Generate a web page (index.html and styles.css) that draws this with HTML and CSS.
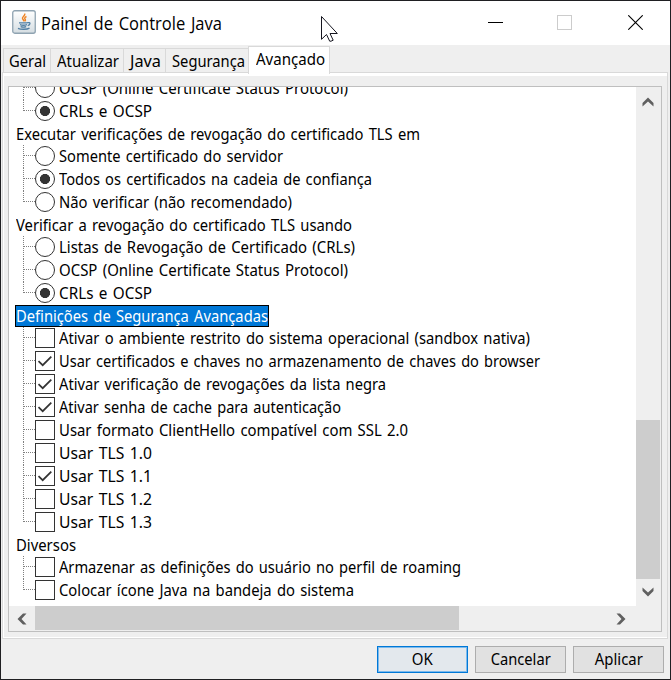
FILE: index.html
```html
<!DOCTYPE html>
<html lang="pt-BR">
<head>
<meta charset="utf-8">
<title>Painel de Controle Java</title>
<link rel="stylesheet" href="styles.css">
</head>
<body>
<div class="window">
  <header class="titlebar">
    <svg class="logo" width="24" height="24" viewBox="0 0 24 24">
      <defs><linearGradient id="g" x1="0" y1="0" x2="0" y2="1"><stop offset="0" stop-color="#fff"/><stop offset="1" stop-color="#d5dde2"/></linearGradient></defs>
      <rect x=".75" y=".75" width="22.5" height="22.5" rx="2" fill="url(#g)" stroke="#8fa3b1" stroke-width="1.3"/>
      <path d="M12.700 3.500c1.200 2-3 3.200-2.200 5 .3.900 1.500 1.600 1.500 3M14.500 6.500c-2.400 1.200-2 2.100-1.200 3 .5.700 0 1.300-.4 1.700" fill="none" stroke="#ef8322" stroke-width="1.400"/>
      <path d="M7 12.800h8.500M8 14.700c2 .7 5 .6 7 0M8.600 16.600c1.800.6 4 .6 5.600 0M15.500 12.700c3.300-.8 3.200 2.200.2 3M6 18.300c3 1.400 9 1.200 11.500-.2" fill="none" stroke="#527fa3" stroke-width="1.300"/>
    </svg>
    <span class="title" data-width="181">Painel de Controle Java</span>
    <div class="controls">
      <svg width="15" height="15" viewBox="0 0 15 15" shape-rendering="crispEdges"><path d="M0 7.500h15" stroke="#000"/></svg>
      <svg width="15" height="15" viewBox="0 0 15 15"><rect x=".5" y=".5" width="14" height="14" fill="none" stroke="#ccc"/></svg>
      <svg class="close" width="15" height="15" viewBox="0 0 15 15"><path d="M.3.3l14.400 14.400M14.700.3L.3 14.700" stroke="#000" stroke-width="1.100"/></svg>
    </div>
  </header>
  <nav class="tabs">
    <div class="tab geral"><span data-width="37">Geral</span></div>
    <div class="tab atualizar"><span data-width="62">Atualizar</span></div>
    <div class="tab java"><span data-width="31">Java</span></div>
    <div class="tab seguranca"><span data-width="73">Segurança</span></div>
    <div class="tab active"><span data-width="69">Avançado</span></div>
  </nav>
  <main class="pane">
    <div class="scrollpane">
      <div class="view">
        <ul class="group">
          <li><i class="radio"></i><span data-width="289">OCSP (Online Certificate Status Protocol)</span></li>
          <li><i class="radio on"></i><span data-width="93">CRLs e OCSP</span></li>
        </ul>
        <div class="head"><span data-width="404">Executar verificações de revogação do certificado TLS em</span></div>
        <ul class="group">
          <li><i class="radio"></i><span data-width="224">Somente certificado do servidor</span></li>
          <li><i class="radio on"></i><span data-width="313">Todos os certificados na cadeia de confiança</span></li>
          <li><i class="radio"></i><span data-width="233">Não verificar (não recomendado)</span></li>
        </ul>
        <div class="head"><span data-width="336">Verificar a revogação do certificado TLS usando</span></div>
        <ul class="group">
          <li><i class="radio"></i><span data-width="296">Listas de Revogação de Certificado (CRLs)</span></li>
          <li><i class="radio"></i><span data-width="289">OCSP (Online Certificate Status Protocol)</span></li>
          <li><i class="radio on"></i><span data-width="93">CRLs e OCSP</span></li>
        </ul>
        <div class="head selected"><span data-width="252">Definições de Segurança Avançadas</span></div>
        <ul class="group">
          <li><i class="check"></i><span data-width="471">Ativar o ambiente restrito do sistema operacional (sandbox nativa)</span></li>
          <li><i class="check on"><svg viewBox="0 0 20 20"><path d="M3.500 10.200l4.200 4 8.600-8.600"/></svg></i><span data-width="481">Usar certificados e chaves no armazenamento de chaves do browser</span></li>
          <li><i class="check on"><svg viewBox="0 0 20 20"><path d="M3.500 10.200l4.200 4 8.600-8.600"/></svg></i><span data-width="327">Ativar verificação de revogações da lista negra</span></li>
          <li><i class="check on"><svg viewBox="0 0 20 20"><path d="M3.500 10.200l4.200 4 8.600-8.600"/></svg></i><span data-width="282">Ativar senha de cache para autenticação</span></li>
          <li><i class="check"></i><span data-width="349">Usar formato ClientHello compatível com SSL 2.0</span></li>
          <li><i class="check"></i><span data-width="93">Usar TLS 1.0</span></li>
          <li><i class="check on"><svg viewBox="0 0 20 20"><path d="M3.500 10.200l4.200 4 8.600-8.600"/></svg></i><span data-width="93">Usar TLS 1.1</span></li>
          <li><i class="check"></i><span data-width="93">Usar TLS 1.2</span></li>
          <li><i class="check"></i><span data-width="93">Usar TLS 1.3</span></li>
        </ul>
        <div class="head"><span data-width="60">Diversos</span></div>
        <ul class="group">
          <li><i class="check"></i><span data-width="402">Armazenar as definições do usuário no perfil de roaming</span></li>
          <li><i class="check"></i><span data-width="295">Colocar ícone Java na bandeja do sistema</span></li>
        </ul>
      </div>
      <div class="vbar">
        <svg width="12" height="10" viewBox="0 0 12 10"><path d="M.5 6L6 .5 11.500 6v3.500L6 4.500l-5.500 5z"/></svg>
        <div class="thumb"></div>
        <svg width="12" height="10" viewBox="0 0 12 10"><path d="M.5 4L6 9.500 11.500 4V.5L6 5.500.5.500z"/></svg>
      </div>
      <div class="hbar">
        <svg width="10" height="12" viewBox="0 0 10 12"><path d="M6 .5L.5 6 6 11.500h3.500L4.500 6l5-5.500z"/></svg>
        <div class="thumb"></div>
        <svg width="10" height="12" viewBox="0 0 10 12"><path d="M4 .5L9.500 6 4 11.500H.5L5.500 6 .5.500z"/></svg>
      </div>
    </div>
  </main>
  <footer class="buttons">
    <button class="primary"><span data-width="21">OK</span></button>
    <button><span data-width="60">Cancelar</span></button>
    <button><span data-width="48">Aplicar</span></button>
  </footer>
  <svg class="cursor" width="20" height="29" viewBox="0 0 20 29"><path d="M2.500 2.500v22.800l5-4.800 3.200 6.700h1.300l2.200-1-3.200-6.700h7.300z" fill="#fff" stroke="#15151f" stroke-width="1"/></svg>
</div>
<script src="fit.js"></script>
</body>
</html>
```
FILE: styles.css
```css
* { box-sizing: border-box; }
body { margin: 0; background: #fff; color: #000; font: 16px/22px "Noto Sans", "Open Sans", sans-serif; overflow: hidden; }
.window { position: relative; width: 671px; height: 680px; border: 1px solid #1f1f22; background: #efefef; display: flex; flex-direction: column; }
span[data-width] { display: inline-block; white-space: pre; word-spacing: 1.5px; transform-origin: 0 50%; }
.titlebar { height: 44px; flex: none; background: #fff; display: flex; align-items: center; padding: 0 27px 0 11px; }
.logo { margin-top: -2px; }
.title { font-size: 18px; margin-left: 5px; font-family: "Open Sans", "Noto Sans", sans-serif; }
.controls { display: flex; gap: 54px; margin: -1px 0 0 auto; }
.controls svg { display: block; }
.close { margin-left: 2px; }
.tabs { height: 28px; flex: none; display: flex; align-items: flex-end; padding-left: 2px; position: relative; z-index: 1; }
.tab { height: 25px; border: 1px solid #d9d9d9; border-width: 1px 0 1px 1px; padding: 1px 0 0 6px; }
.geral { width: 47px; padding-left: 5px; }
.atualizar { width: 73px; }
.java { width: 42px; }
.seguranca { width: 83px; }
.tab.active { width: 82px; height: 28px; margin-bottom: -1px; background: #fff; border-width: 1px 1px 0 1px; padding: 1px 0 0 7px; }
.pane { height: 567px; margin: -1px 2px 0 1px; border: 1px solid #d9d9d9; box-shadow: inset 0 3px #fff, inset 1px 0 #fff, inset 0 -1px #fff; padding: 13px 5px 0; flex: none; }
.scrollpane { width: 654px; height: 546px; border: 1px solid #bfbfbf; display: grid; grid-template: 519px 25px / 627px 25px; background: #efefef; }
.view { background: #fff; overflow: hidden; }
.group { list-style: none; margin: 0; padding: 0; }
.group:first-child { margin-top: -10px; }
.group li { position: relative; height: 23px; display: flex; padding: 1px 0 0 26px; line-height: 21px; }
.group li::before { content: ""; position: absolute; left: 14px; top: 0; height: 100%; border-left: 1px dotted #808080; }
.group li:last-child::before { height: 11px; }
.group li::after { content: ""; position: absolute; left: 14px; top: 10px; width: 12px; border-top: 1px dotted #808080; }
.group span { margin-left: 4px; }
.radio, .check { width: 20px; height: 20px; flex: none; border: 1px solid #333; background: #fff; }
.radio { border-radius: 50%; }
.radio.on { background: radial-gradient(circle, #333 4.800px, #fff 5.300px); }
.check svg { display: block; width: 20px; height: 20px; margin: -1px; }
.check path { fill: none; stroke: #333; stroke-width: 1.700; }
.head { height: 22px; padding-left: 7px; line-height: 22px; }
.head.selected { margin-left: 6px; width: 254px; padding-left: 0; background: #0078d7; color: #fff; border: 1px solid #000; line-height: 20px; }
.vbar, .hbar { display: flex; align-items: center; }
.vbar { flex-direction: column; padding: 10px 1px 9px 0; }
.hbar { padding: 0 10px 0 8px; }
.vbar path, .hbar path { fill: #606060; }
.vbar .thumb { width: 24px; height: 159px; margin: 313px 0 auto 0; background: #cdcdcd; }
.hbar .thumb { width: 424px; height: 24px; margin: 0 auto 1px 8px; background: #cdcdcd; }
.buttons { display: flex; gap: 7px; justify-content: flex-end; padding: 7px 6px 0 0; }
button { width: 91px; height: 27px; padding: 0; border: 1px solid #adadad; background: #e1e1e1; color: #000; font: inherit; line-height: 23px; }
.buttons span[data-width] { transform-origin: 50% 50%; }
button.primary { border-color: #0078d7; box-shadow: inset 0 0 0 1px #7dbaec; background: #e3e8ed; }
.cursor { position: absolute; left: 318px; top: 13px; }
```
FILE: fit.js
```js
// Condense each label to its declared width.
document.querySelectorAll('[data-width]').forEach(function (el) {
  var natural = el.getBoundingClientRect().width;
  el.style.transform = 'scaleX(' + Number(el.dataset.width) / natural + ')';
});
```
